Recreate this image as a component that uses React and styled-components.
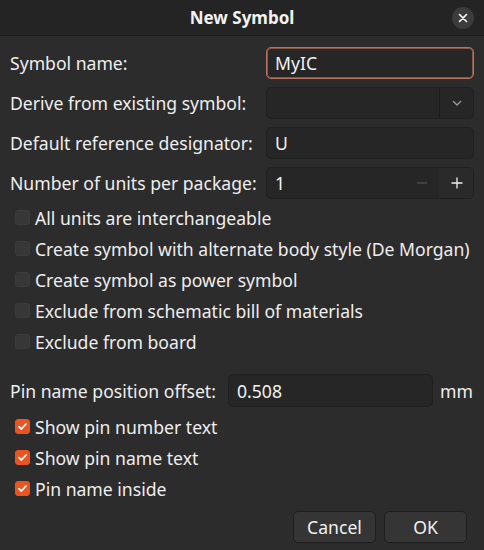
import React from "react";
import styled, { createGlobalStyle } from "styled-components";

const Global = createGlobalStyle`
  html, body { margin: 0; padding: 0; background: #2c2c2c; }
  body { width: 484px; height: 550px; overflow: hidden; font-family: "Noto Sans", "DejaVu Sans", sans-serif; color: #eeeeee; }
  * { box-sizing: border-box; }
`;

const Dialog = styled.div`
  width: 484px;
  height: 550px;
  display: flex;
  flex-direction: column;
  background: #2c2c2c;
  font-size: 17.6px;
`;

const TitleBar = styled.div`
  height: 36px;
  flex: none;
  display: grid;
  grid-template-columns: 44px 1fr 44px;
  align-items: center;
  background: #242424;
  border-bottom: 1px solid #1b1b1b;
`;

const Title = styled.div`
  grid-column: 2;
  text-align: center;
  font-weight: 700;
  font-size: 17px;
  color: #f2f2f2;
`;

const CloseBtn = styled.div`
  justify-self: end;
  margin-right: 10px;
  width: 22px;
  height: 22px;
  border-radius: 50%;
  background: #3c3c3c;
  display: flex;
  align-items: center;
  justify-content: center;
`;

const Body = styled.div`
  flex: 1;
  display: flex;
  flex-direction: column;
  padding: 11px 10px 0 10px;
`;

const FieldGrid = styled.div`
  display: grid;
  grid-template-columns: 256px 208px;
  row-gap: 8px;
  align-items: center;
`;

const Label = styled.div`
  white-space: nowrap;
`;

const Field = styled.div`
  height: 32px;
  border-radius: 5px;
  background: #262626;
  border: 1px solid ${(p) => (p.$focused ? "#b8735f" : "#1f1f1f")};
  box-shadow: ${(p) => (p.$focused ? "inset 0 0 0 1px #8a5646" : "none")};
  display: flex;
  align-items: stretch;
  overflow: hidden;
`;

const FieldText = styled.div`
  flex: 1;
  display: flex;
  align-items: center;
  padding-left: 8px;
  color: #f2f2f2;
`;

const Segment = styled.div`
  width: ${(p) => p.$w}px;
  display: flex;
  align-items: center;
  justify-content: center;
  border-left: 1px solid ${(p) => (p.$line ? "#1c1c1c" : "transparent")};
  background: ${(p) => p.$bg || "transparent"};
`;

const CheckList = styled.div`
  display: flex;
  flex-direction: column;
  padding-left: 5px;
  margin-top: ${(p) => p.$mt}px;
`;

const CheckRow = styled.div`
  height: 31px;
  display: flex;
  align-items: center;
  gap: 5px;
  white-space: nowrap;
`;

const Box = styled.div`
  width: 15px;
  height: 15px;
  border-radius: 3px;
  flex: none;
  background: ${(p) => (p.$checked ? "#e95420" : "#373737")};
  border: 1px solid ${(p) => (p.$checked ? "#e95420" : "#3c3c3c")};
  display: flex;
  align-items: center;
  justify-content: center;
`;

const OffsetRow = styled.div`
  margin-top: 17px;
  display: grid;
  grid-template-columns: 211px 205px auto;
  column-gap: 7px;
  align-items: center;
`;

const OffsetField = styled(Field)`
  height: 33px;
`;

const Buttons = styled.div`
  margin-top: 7px;
  display: flex;
  justify-content: flex-end;
  gap: 8px;
  padding-right: 7px;
`;

const Button = styled.div`
  width: 83px;
  height: 32px;
  border-radius: 5px;
  background: #353535;
  border: 1px solid #1e1e1e;
  display: flex;
  align-items: center;
  justify-content: center;
  color: #f0f0f0;
`;

const Check = () => (
  <svg width="11" height="11" viewBox="0 0 11 11">
    <path d="M2 5.6 L4.4 8 L9 3" fill="none" stroke="#fff" strokeWidth="1.8" strokeLinecap="round" strokeLinejoin="round" />
  </svg>
);

const checks1 = [
  "All units are interchangeable",
  "Create symbol with alternate body style (De Morgan)",
  "Create symbol as power symbol",
  "Exclude from schematic bill of materials",
  "Exclude from board",
];
const checks2 = ["Show pin number text", "Show pin name text", "Pin name inside"];

export default function App() {
  return (
    <>
      <Global />
      <Dialog>
        <TitleBar>
          <Title>New Symbol</Title>
          <CloseBtn>
            <svg width="10" height="10" viewBox="0 0 10 10">
              <path d="M1.5 1.5 L8.5 8.5 M8.5 1.5 L1.5 8.5" stroke="#fff" strokeWidth="1.6" strokeLinecap="round" />
            </svg>
          </CloseBtn>
        </TitleBar>
        <Body>
          <FieldGrid>
            <Label>Symbol name:</Label>
            <Field $focused>
              <FieldText>MyIC</FieldText>
            </Field>
            <Label>Derive from existing symbol:</Label>
            <Field>
              <FieldText />
              <Segment $w={34} $line>
                <svg width="12" height="8" viewBox="0 0 12 8">
                  <path d="M2 2 L6 6 L10 2" fill="none" stroke="#9a9a9a" strokeWidth="1.3" />
                </svg>
              </Segment>
            </Field>
            <Label>Default reference designator:</Label>
            <Field>
              <FieldText>U</FieldText>
            </Field>
            <Label>Number of units per package:</Label>
            <Field>
              <FieldText>1</FieldText>
              <Segment $w={35}>
                <svg width="12" height="12" viewBox="0 0 12 12">
                  <path d="M1 6 H11" stroke="#4a4a4a" strokeWidth="1.3" />
                </svg>
              </Segment>
              <Segment $w={34} $bg="#2a2a2a">
                <svg width="12" height="12" viewBox="0 0 12 12">
                  <path d="M0.5 6 H11.5 M6 0.5 V11.5" stroke="#f0f0f0" strokeWidth="1.3" />
                </svg>
              </Segment>
            </Field>
          </FieldGrid>
          <CheckList $mt={3}>
            {checks1.map((t) => (
              <CheckRow key={t}>
                <Box />
                {t}
              </CheckRow>
            ))}
          </CheckList>
          <OffsetRow>
            <Label>Pin name position offset:</Label>
            <OffsetField>
              <FieldText>0.508</FieldText>
            </OffsetField>
            <Label>mm</Label>
          </OffsetRow>
          <CheckList $mt={4}>
            {checks2.map((t) => (
              <CheckRow key={t}>
                <Box $checked>
                  <Check />
                </Box>
                {t}
              </CheckRow>
            ))}
          </CheckList>
          <Buttons>
            <Button>Cancel</Button>
            <Button>OK</Button>
          </Buttons>
        </Body>
      </Dialog>
    </>
  );
}
